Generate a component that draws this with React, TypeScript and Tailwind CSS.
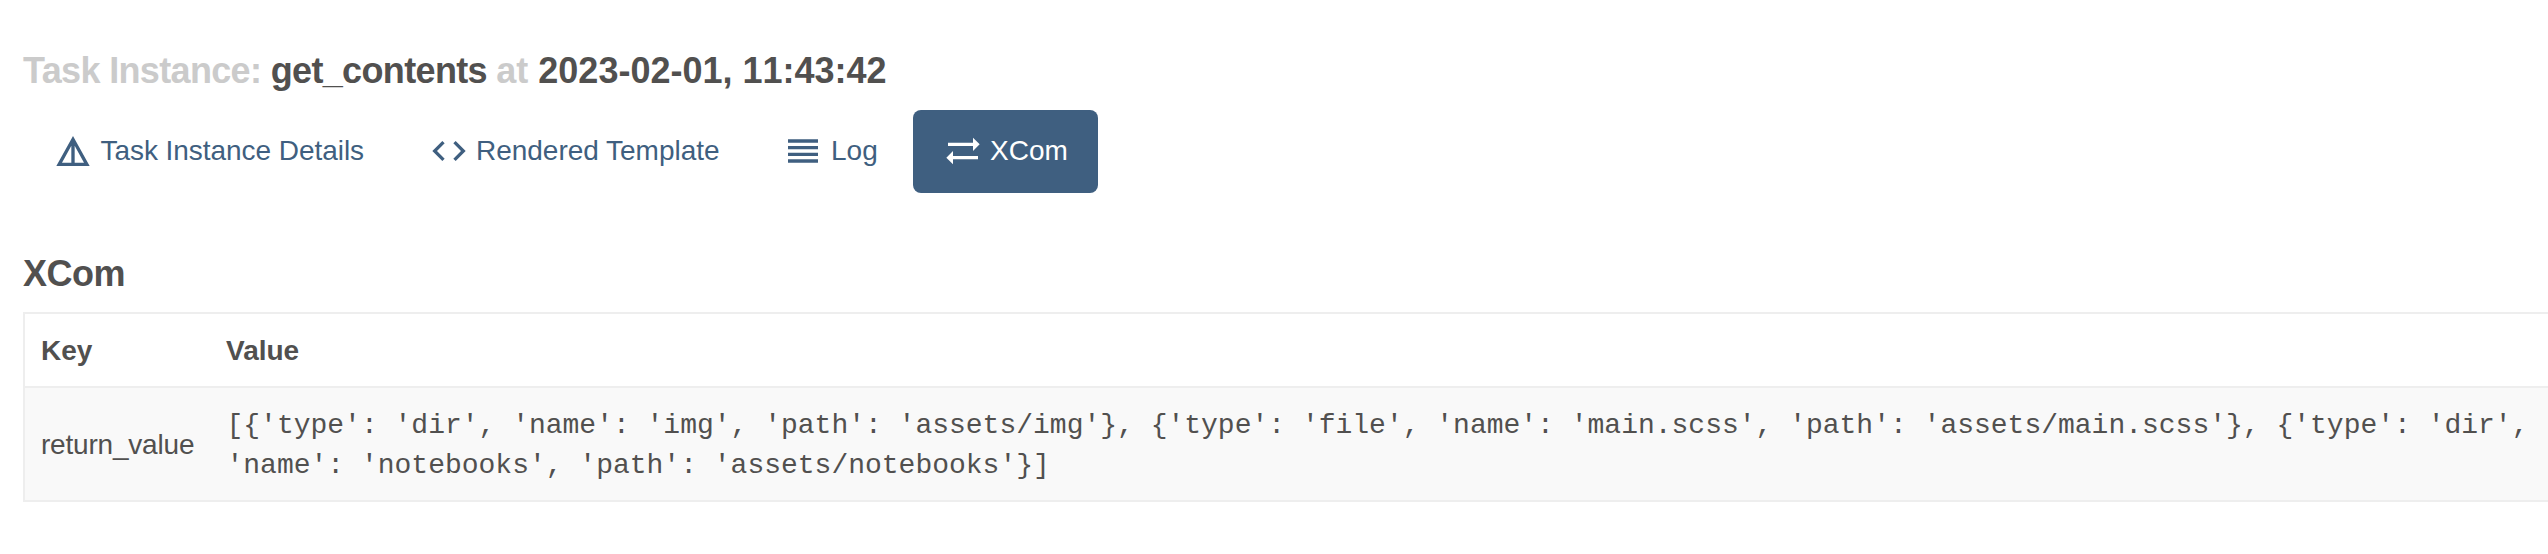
import React from "react";

const tabs = [
  {
    label: "Task Instance Details",
    width: "w-[372px]",
    gap: "ml-[7.5px] tracking-[-0.05px]",
    icon: "M12 3L2 21h20L12 3zm1 5.92L18.6 19H13V8.92zm-2 0V19H5.4L11 8.92z",
  },
  {
    label: "Rendered Template",
    width: "w-[350px]",
    gap: "ml-[7px] tracking-[-0.02px]",
    icon: "M9.4 16.6L4.8 12l4.6-4.6L8 6l-6 6 6 6 1.4-1.4zm5.2 0l4.6-4.6-4.6-4.6L16 6l6 6-6 6-1.4-1.4z",
  },
  {
    label: "Log",
    width: "w-[156px]",
    gap: "ml-[8px]",
    icon: "M3 15h18v-2H3v2zm0 4h18v-2H3v2zm0-8h18V9H3v2zm0-6v2h18V5H3z",
  },
  {
    label: "XCom",
    width: "w-[185px]",
    gap: "ml-[7px]",
    icon: "M22 8l-4-4v3H3v2h15v3l4-4zM2 16l4 4v-3h15v-2H6v-3l-4 4z",
    active: true,
  },
];

export default function App() {
  return (
    <div className="h-[554px] w-full overflow-hidden bg-white pl-[23px] pt-[51px] font-['Liberation_Sans',Arial,sans-serif] text-[28px] leading-[40px] text-[#51504f]">
      <h1 className="h-10 whitespace-nowrap text-[36px] font-bold leading-[40px]">
        <span className="tracking-[-0.65px]">
          <span className="text-[#cbcbcb]">Task Instance:</span> get_contents{" "}
        </span>
        <span className="text-[#cbcbcb]">at</span>{" "}
        <span className="[font-kerning:none]">2023-02-01, 11:43:42</span>
      </h1>

      <nav className="mt-[19px] flex gap-1">
        {tabs.map((t) => (
          <a
            key={t.label}
            className={`flex h-[83px] shrink-0 items-start whitespace-nowrap rounded-lg pl-[30px] pt-[21px] ${t.width} ${
              t.active ? "bg-[#3f5f80] text-white" : "text-[#3f5f80]"
            }`}
          >
            <svg viewBox="0 0 24 24" className="size-10 shrink-0" fill="currentColor">
              <path d={t.icon} />
            </svg>
            <span className={t.gap}>{t.label}</span>
          </a>
        ))}
      </nav>

      <h2 className="mt-[61px] h-[58px] text-[36px] font-bold leading-[40px] tracking-[-0.5px]">XCom</h2>

      <div className="w-[2560px] border-2 border-[#eeeeee]">
        <div className="flex h-[72px] items-center pl-4 pt-px font-bold">
          <div className="w-[185px]">Key</div>
          <div>Value</div>
        </div>
        <div className="flex h-[114px] items-center border-t-2 border-[#eeeeee] bg-[#f9f9f9] pl-4">
          <div className="w-[185.5px] pt-0.5 tracking-[-0.2px]">return_value</div>
          <div className="w-[2330px] whitespace-pre pt-1 font-['Liberation_Mono','Courier_New',monospace]">
            {"[{'type': 'dir', 'name': 'img', 'path': 'assets/img'}, {'type': 'file', 'name': 'main.scss', 'path': 'assets/main.scss'}, {'type': 'dir',\n'name': 'notebooks', 'path': 'assets/notebooks'}]"}
          </div>
        </div>
      </div>
    </div>
  );
}
